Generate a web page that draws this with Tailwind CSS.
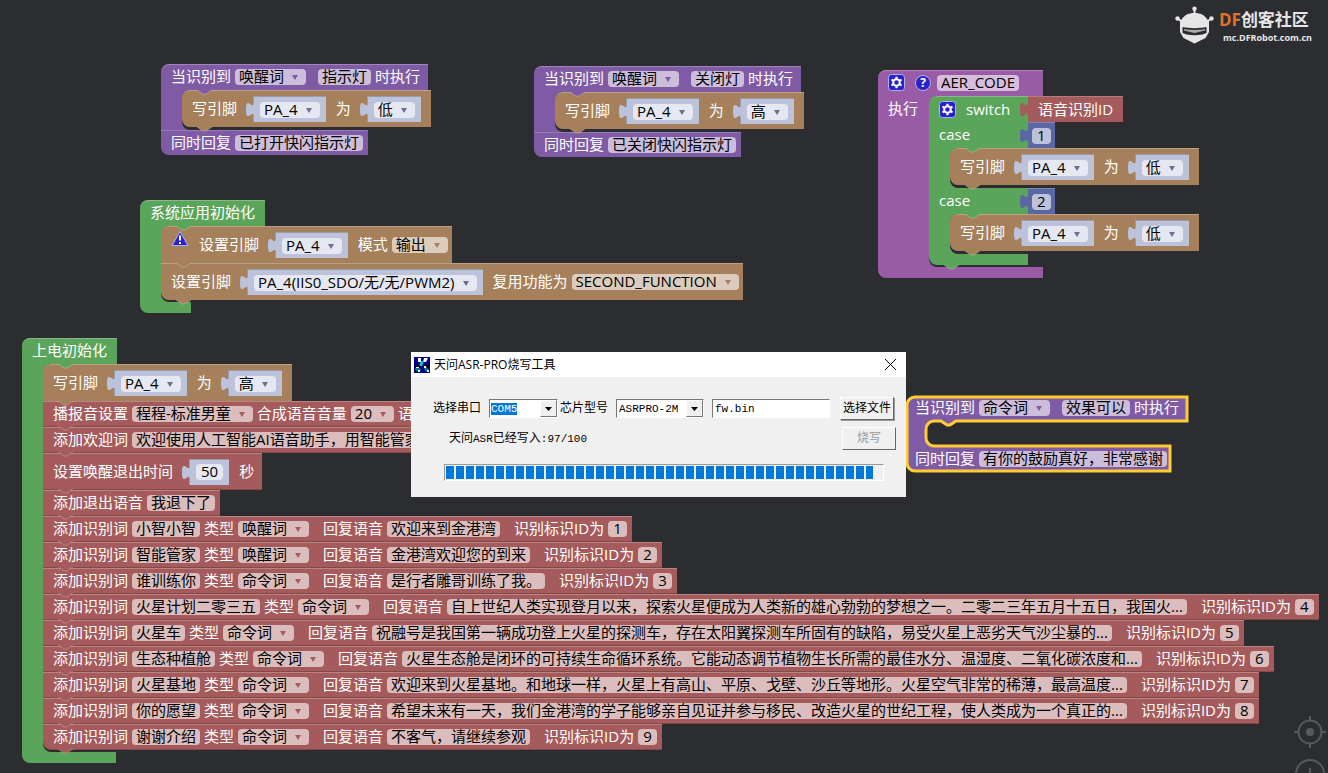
<!DOCTYPE html>
<html lang="zh-CN">
<head>
<meta charset="utf-8">
<meta name="viewport" content="width=device-width, initial-scale=1">
<title>天问Block</title>
<script src="https://cdn.jsdelivr.net/npm/@tailwindcss/browser@4"></script>
</head>
<body class="bg-[#2b2d30]">
<main class="relative h-screen w-full overflow-hidden bg-[#2b2d30] font-['Open_Sans','Noto_Sans_CJK_SC',sans-serif] text-[15px] leading-4 whitespace-nowrap">

  <div id="workspace"></div>

  <!-- Selected block: the outline carries the highlight -->
  <section class="absolute left-[905px] top-[395px] w-[284px]">
    <svg class="absolute left-0 top-0 h-[78px] w-[284px]" viewBox="0 0 284 78" fill="none">
      <path d="M2 10a8 8 0 0 1 8-8H282V26H51l-6 4h-3l-6-4H29a8 8 0 0 0-8 8V43a8 8 0 0 0 8 8H265V76H10a8 8 0 0 1-8-8z" fill="#805ba5" stroke="#fc3" stroke-width="3"/>
    </svg>
    <div class="relative flex h-[26px] items-center pl-2.5 text-[#805ba5]" id="picked-head"></div>
    <div class="h-[25px]"></div>
    <div class="relative flex h-[26px] items-center pl-2.5" id="picked-foot"></div>
  </section>

  <!-- Community logo -->
  <a href="#" class="absolute right-4 top-1.5 flex items-center gap-1 text-[#e6e6e6]">
    <svg class="h-10 w-10" viewBox="0 0 40 40" fill="currentColor">
      <circle cx="19.500" cy="2.800" r="2.200"/><circle cx="2.500" cy="12.500" r="2.200"/><circle cx="36.500" cy="12.500" r="2.200"/>
      <path d="M19.500 3v6M2.500 12.500l5 3.500M36.500 12.500l-5 3.500" stroke="currentColor" stroke-width="2"/>
      <path d="M19.500 7c6 0 10 2 12.500 6l2 2v11l-3.500 6-11 5.500-11-5.500L5 26V15l2-2c2.500-4 6.500-6 12.500-6z"/>
      <path d="M7.500 21c7 1.500 17 1.500 24 0v6l-4 1.500c-5 1-11 1-16 0L7.500 27z" fill="#2b2d30"/>
      <path d="M9 23c6 1.200 15 1.200 21 0v1.500L19.500 27 9 24.500z" fill="#aaa"/>
    </svg>
    <span class="flex flex-col items-start">
      <span class="text-[17px] font-bold leading-6"><span class="text-[#e0702c]">DF</span>创客社区</span>
      <span class="pl-1 text-[9px] font-bold leading-3">mc.DFRobot.com.cn</span>
    </span>
  </a>

  <!-- Canvas zoom controls -->
  <div class="absolute right-[2px] top-[716px] flex flex-col gap-[9px] text-[#58595b]">
    <button aria-label="居中" class="block"><svg class="block h-8 w-8" viewBox="0 0 32 32" fill="none" stroke="currentColor" stroke-width="2"><circle cx="16" cy="16" r="11.500"/><circle cx="16" cy="16" r="4" fill="currentColor" stroke="none"/><path d="M16 0v5M16 27v5M0 16h5M27 16h5"/></svg></button>
    <button aria-label="放大" class="block"><svg class="block h-8 w-8" viewBox="0 0 32 32" fill="none" stroke="currentColor" stroke-width="2"><circle cx="16" cy="17" r="14"/><path d="M16 11v12M10 17h12"/></svg></button>
  </div>

  <!-- Flashing tool dialog -->
  <section role="dialog" aria-labelledby="dlg-title" class="absolute left-[411px] top-[352px] z-20 w-[495px] bg-[#f0f0f0] pb-4 font-['Liberation_Mono','Noto_Sans_CJK_SC',monospace] text-[12px] text-black">
    <header class="flex h-[25px] items-center gap-1 bg-white pl-[3px] pr-2">
      <svg class="h-4 w-4" viewBox="0 0 16 16"><path fill="#000080" d="M0 0h16v16H0z"/><path d="M4 1h3v4H4zM10 1h4l-2 4h-3z" fill="#fff"/><path d="M7 4h3l-2 5H5z" fill="#0cc"/><path d="M1 8h5v3H1zM10 8h5v3h-5z" fill="#000"/><path d="M1 11h5l1 3H2zM10 10h3l2 4h-4z" fill="#008080"/><path d="M2 10h3v1H2zM10 9h2v2h-2zM4 13h2v2H4zM13 13h2v2h-2z" fill="#dff"/></svg>
      <h1 id="dlg-title" class="grow font-['Open_Sans','Noto_Sans_CJK_SC',sans-serif]">天问ASR-PRO烧写工具</h1>
      <button aria-label="关闭" class="p-0.5"><svg class="block h-[11px] w-[11px]" viewBox="0 0 11 11" stroke="#000" fill="none"><path d="M0 0l11 11M11 0L0 11"/></svg></button>
    </header>
    <div class="flex items-center pl-[22px] pr-3 pt-5">
      <label for="port" class="w-14">选择串口</label>
      <span class="flex h-[19px] w-[69px] items-center justify-between border border-b-white border-l-[#777] border-r-white border-t-[#777] bg-white pl-px">
        <select id="port" class="appearance-none bg-[#0078d7] text-[11px] leading-3 text-white field-sizing-content"><option>COM5</option></select>
        <span class="flex h-[17px] w-[17px] items-center justify-center border border-b-[#777] border-l-white border-r-[#777] border-t-white bg-[#f0f0f0]"><svg class="h-1 w-[7px]" viewBox="0 0 7 4"><path d="M0 0h7L3.500 4z"/></svg></span>
      </span>
      <label for="chip" class="ml-0.5 w-14">芯片型号</label>
      <span class="flex h-[19px] w-[88px] items-center justify-between border border-b-white border-l-[#777] border-r-white border-t-[#777] bg-white pl-0.5">
        <select id="chip" class="appearance-none text-[11px] leading-3 field-sizing-content"><option>ASRPRO-2M</option></select>
        <span class="flex h-[17px] w-[17px] items-center justify-center border border-b-[#777] border-l-white border-r-[#777] border-t-white bg-[#f0f0f0]"><svg class="h-1 w-[7px]" viewBox="0 0 7 4"><path d="M0 0h7L3.500 4z"/></svg></span>
      </span>
      <input aria-label="固件文件" value="fw.bin" class="ml-2 h-[19px] w-[118px] border border-b-white border-l-[#777] border-r-white border-t-[#777] bg-white pl-0.5 text-[11px]">
      <button class="ml-auto h-[23px] w-[54px] border border-b-[#666] border-l-white border-r-[#666] border-t-white shadow-[1px_1px_0_#999]">选择文件</button>
    </div>
    <div class="flex items-center justify-between pl-[38px] pr-2.5 pt-[7px]">
      <p>天问<span class="text-[11px]">ASR</span>已经写入<span class="text-[11px]">:97/100</span></p>
      <button disabled class="h-[23px] w-[54px] border border-b-[#666] border-l-white border-r-[#666] border-t-white text-[#999]">烧写</button>
    </div>
    <div role="progressbar" aria-label="烧写进度" aria-valuenow="97" aria-valuemin="0" aria-valuemax="100" class="ml-[33px] mr-[22px] mt-3.5 h-[17px] border border-b-white border-l-[#999] border-r-white border-t-[#999] p-px">
      <div class="h-full bg-[repeating-linear-gradient(90deg,#0078d7_0px,#0078d7_8px,transparent_8px,transparent_10px)]" style="width:98%"></div>
    </div>
  </section>
</main>

<script>
// Parts of a block row
const label = t => `<span class="pb-0.5 text-white">${t}</span>`;
const field = t => `<input aria-label="${t}" value="${t}" class="mx-1 h-4 rounded bg-white/60 px-1 pb-0.5 text-black field-sizing-content">`;
const num = t => `<input aria-label="数值" value="${t}" class="mx-1 h-4 rounded bg-white/60 px-[5px] pb-0.5 text-black field-sizing-content">`;
const arrow = `<svg class="ml-2 mr-2 mt-px h-[5px] w-[6px]" viewBox="0 0 6 5" fill="currentColor"><path d="M0 0h6L3 5z"/></svg>`;
const pick = t => `<span class="mx-1 flex h-4 items-center rounded bg-white/60"><select aria-label="${t}" class="mb-0.5 h-6 shrink-0 appearance-none pl-1 leading-6 text-black field-sizing-content"><option>${t}</option></select>${arrow}</span>`;
const gap = `<span class="w-2.5"></span>`;
const small = `<span class="w-1"></span>`;
const plug = `<svg class="absolute -left-2 top-0 h-[26px] w-2" viewBox="0 0 8 26" fill="currentColor"><path d="M8 5c0 10-8-8-8 7.500s8-2.500 8 7.500z"/></svg>`;
const value = inner => `<span class="relative ml-4 mr-2.5 flex h-[26px] items-center border-t border-l border-black/20 bg-[#bdc2db] px-0.5 text-[#6b6f96]"><span class="text-[#bdc2db]">${plug}</span>${inner}</span>`;
const knob = `<svg class="absolute left-[15px] top-full z-10 h-[5px] w-[15px]" viewBox="0 0 15 5"><path d="M0 0l6 4h3l6-4z" fill="currentColor"/><path d="M0 0l6 4h3l6-4" fill="none" stroke="#fff" stroke-opacity=".25"/></svg>`;
const headKnob = `<svg class="absolute left-9 top-full z-10 h-[5px] w-[15px]" viewBox="0 0 15 5"><path d="M0 0l6 4h3l6-4z" fill="currentColor"/><path d="M0 0l6 4h3l6-4" fill="none" stroke="#fff" stroke-opacity=".25"/></svg>`;
const gear = `<button aria-label="设置" class="block"><svg class="block h-[17px] w-[17px]" viewBox="0 0 17 17"><rect x=".500" y=".500" width="16" height="16" rx="3" fill="#2a22c8" stroke="#a9b4f0"/><circle cx="8.500" cy="8.500" r="3.300" fill="none" stroke="#fff" stroke-width="2"/><path d="M8.500 2.800v2M8.500 12.200v2M3.500 5.600l1.800 1M11.700 10.400l1.800 1M3.500 11.400l1.800-1M11.700 6.600l1.800-1" stroke="#fff" stroke-width="2.200"/></svg></button>`;
const help = `<button aria-label="帮助" class="ml-2.5 mr-0.5 flex h-4 w-4 items-center justify-center rounded-full border border-[#a9b4f0] bg-[#2a22c8] text-[12px] font-bold leading-3 text-white">?</button>`;
const warn = `<button aria-label="警告" class="mr-2.5 block self-start pt-[3px]"><svg class="block h-[17px] w-[18px]" viewBox="0 0 18 17"><path d="M9 1.500L16.800 15.500H1.200z" fill="#2a22c8" stroke="#a9b4f0" stroke-linejoin="round"/><path d="M9 5.500v5M9 12v2" stroke="#fff" stroke-width="2"/></svg></button>`;

const brown = inner => `<div class="relative flex h-[37px] w-max items-center border-t border-white/25 bg-[#a5805b] pl-2.5 text-[#a5805b] first:rounded-tl-lg last:rounded-bl-lg">${inner}${knob}</div>`;
const red = inner => `<div class="relative flex h-[26px] w-max items-center border-y border-t-white/25 border-b-black/20 bg-[#a55b5b] pl-2.5 pr-px text-[#a55b5b] last:rounded-bl-lg">${inner}${knob}</div>`;
const redTall = inner => `<div class="relative flex h-[37px] w-max items-center border-y border-t-white/25 border-b-black/20 bg-[#a55b5b] pl-2.5 pr-2 text-[#a55b5b]">${inner}${knob}</div>`;
const write = level => brown(label('写引脚') + value(pick('PA_4')) + label('为') + value(pick(level)));

const event = (word, reply, level, place) => `
<section class="absolute ${place}">
  <div class="relative flex h-[26px] w-max items-center rounded-tl-lg border-t border-white/25 bg-[#805ba5] pb-0.5 pl-2.5 pr-2 text-[#805ba5]">${label('当识别到')}${pick('唤醒词')}${small}${field(word)}${label('时执行')}${headKnob}</div>
  <div class="flex">
    <div class="w-[29px] shrink-0 bg-[#805ba5]"></div>
    <div class="-ml-2 rounded-l-lg bg-[#2b2d30] pb-[3px]">${write(level)}</div>
  </div>
  <div class="flex h-[25px] w-max items-center rounded-bl-lg border-t border-white/20 bg-[#805ba5] pl-2.5 pr-px">${label('同时回复')}${field(reply)}</div>
</section>`;

const word = (w, kind, reply, id) => red(label('添加识别词') + field(w) + label('类型') + pick(kind) + gap + label('回复语音') + field(reply) + gap + label('识别标识ID为') + num(id));

const hat = (title, rows, footer, place) => `
<section class="absolute ${place}">
  <div class="relative flex h-[26px] w-max items-center rounded-tl-lg border-t border-white/25 bg-[#5ba55b] px-2.5 pb-0.5 text-[#5ba55b]">${label(title)}${headKnob}</div>
  <div class="flex">
    <div class="w-[29px] shrink-0 bg-[#5ba55b]"></div>
    <div class="-ml-2 rounded-l-lg bg-[#2b2d30] pb-0.5">${rows}</div>
  </div>
  ${footer}
</section>`;

const caseRow = n => `
<div class="flex h-[26px]">
  <div class="relative flex w-[99px] items-center bg-[#5ba55b] pl-2.5 text-[#5ba55b]">${label('case')}${headKnob}</div>
  <div class="relative flex items-center border-t border-white/20 bg-[#5b67a5] text-[#5b67a5]">${plug}${num(n)}</div>
</div>
<div class="flex">
  <div class="w-[29px] shrink-0 bg-[#5ba55b]"></div>
  <div class="-ml-2 rounded-l-lg bg-[#2b2d30] pb-[3px]">${write('低')}</div>
</div>`;

const func = `
<section class="absolute left-[878px] top-[70px]">
  <div class="relative flex h-[26px] w-[165px] items-center rounded-tl-lg border-t border-white/25 bg-[#995ba5] pb-0.5 pl-2.5">${gear}${help}${field('AER_CODE')}</div>
  <div class="flex">
    <div class="w-[59px] shrink-0 bg-[#995ba5] pl-2.5 pt-1">${label('执行')}</div>
    <div class="-ml-2 rounded-l-lg bg-[#2b2d30] pb-0.5">
      <div class="flex h-[26px]">
        <div class="flex w-[99px] items-center gap-2.5 rounded-tl-lg border-t border-white/25 bg-[#5ba55b] pl-2.5">${gear}${label('switch')}</div>
        <div class="relative flex items-center border-t border-white/20 bg-[#a55b5b] px-2.5 text-[#a55b5b]">${plug}${label('语音识别ID')}</div>
      </div>
      ${caseRow(1)}${caseRow(2)}
      <div class="relative h-[11px] w-[99px] rounded-bl-lg bg-[#5ba55b] text-[#5ba55b]">${knob}</div>
    </div>
  </div>
  <div class="h-[11px] w-[165px] rounded-bl-lg bg-[#995ba5]"></div>
</section>`;

const system = hat('系统应用初始化',
  brown(warn + label('设置引脚') + value(pick('PA_4')) + label('模式') + pick('输出')) +
  brown(label('设置引脚') + value(pick('PA_4(IIS0_SDO/无/无/PWM2)')) + label('复用功能为') + pick('SECOND_FUNCTION')),
  `<div class="h-[11px] w-[51px] rounded-bl-lg bg-[#5ba55b]"></div>`, 'left-[140px] top-[200px]');

const power = hat('上电初始化',
  write('高') +
  red(label('播报音设置') + pick('程程-标准男童') + label('合成语音音量') + pick('20') + label('语速') + pick('10')) +
  red(label('添加欢迎词') + field('欢迎使用人工智能AI语音助手，用智能管家唤醒我')) +
  redTall(label('设置唤醒退出时间') + value(num('50')) + label('秒')) +
  red(label('添加退出语音') + field('我退下了')) +
  word('小智小智', '唤醒词', '欢迎来到金港湾', 1) +
  word('智能管家', '唤醒词', '金港湾欢迎您的到来', 2) +
  word('谁训练你', '命令词', '是行者雕哥训练了我。', 3) +
  word('火星计划二零三五', '命令词', '自上世纪人类实现登月以来，探索火星便成为人类新的雄心勃勃的梦想之一。二零二三年五月十五日，我国火...', 4) +
  word('火星车', '命令词', '祝融号是我国第一辆成功登上火星的探测车，存在太阳翼探测车所固有的缺陷，易受火星上恶劣天气沙尘暴的...', 5) +
  word('生态种植舱', '命令词', '火星生态舱是闭环的可持续生命循环系统。它能动态调节植物生长所需的最佳水分、温湿度、二氧化碳浓度和...', 6) +
  word('火星基地', '命令词', '欢迎来到火星基地。和地球一样，火星上有高山、平原、戈壁、沙丘等地形。火星空气非常的稀薄，最高温度...', 7) +
  word('你的愿望', '命令词', '希望未来有一天，我们金港湾的学子能够亲自见证并参与移民、改造火星的世纪工程，使人类成为一个真正的...', 8) +
  word('谢谢介绍', '命令词', '不客气，请继续参观', 9),
  `<div class="h-[11px] w-[94px] rounded-bl-lg bg-[#5ba55b]"></div>`, 'left-[22px] top-[338px]');

document.getElementById('workspace').innerHTML =
  event('指示灯', '已打开快闪指示灯', '低', 'left-[161px] top-[64px]') +
  event('关闭灯', '已关闭快闪指示灯', '高', 'left-[534px] top-[66px]') +
  func + system + power;
document.getElementById('picked-head').innerHTML = label('当识别到') + pick('命令词') + small + field('效果可以') + label('时执行');
document.getElementById('picked-foot').innerHTML = label('同时回复') + field('有你的鼓励真好，非常感谢');
</script>
</body>
</html>
